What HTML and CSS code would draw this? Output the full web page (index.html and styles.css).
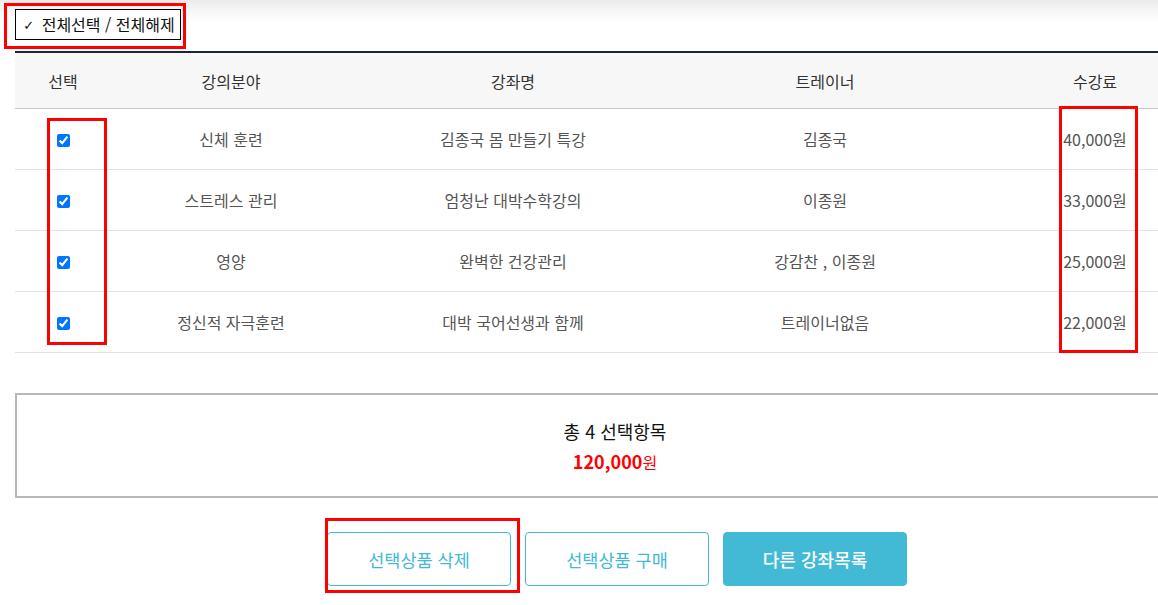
FILE: index.html
```html
<!DOCTYPE html>
<html lang="ko">
<head>
<meta charset="utf-8">
<title>장바구니</title>
<link rel="stylesheet" href="styles.css">
</head>
<body>
<div class="page">
  <div class="wrap">
    <button class="select-all" type="button"><span class="tick">✓</span> 전체선택 / 전체해제</button>

    <table class="cart">
      <colgroup>
        <col class="c1"><col class="c2"><col class="c3"><col class="c4"><col class="c5">
      </colgroup>
      <thead>
        <tr><th>선택</th><th>강의분야</th><th>강좌명</th><th>트레이너</th><th>수강료</th></tr>
      </thead>
      <tbody>
        <tr><td><input type="checkbox" checked></td><td>신체 훈련</td><td>김종국 몸 만들기 특강</td><td>김종국</td><td>40,000원</td></tr>
        <tr><td><input type="checkbox" checked></td><td>스트레스 관리</td><td>엄청난 대박수학강의</td><td>이종원</td><td>33,000원</td></tr>
        <tr><td><input type="checkbox" checked></td><td>영양</td><td>완벽한 건강관리</td><td>강감찬 , 이종원</td><td>25,000원</td></tr>
        <tr><td><input type="checkbox" checked></td><td>정신적 자극훈련</td><td>대박 국어선생과 함께</td><td>트레이너없음</td><td>22,000원</td></tr>
      </tbody>
    </table>

    <div class="summary">
      <p class="count">총 4 선택항목</p>
      <p class="total"><strong>120,000</strong>원</p>
    </div>

    <div class="actions">
      <button class="btn btn-line" type="button">선택상품 삭제</button>
      <button class="btn btn-line" type="button">선택상품 구매</button>
      <button class="btn btn-fill" type="button">다른 강좌목록</button>
    </div>
  </div>

  <div class="mark mark-all"></div>
  <div class="mark mark-check"></div>
  <div class="mark mark-price"></div>
  <div class="mark mark-delete"></div>
</div>
</body>
</html>
```

FILE: styles.css
```css
html, body {
  margin: 0;
  padding: 0;
  overflow: hidden;
  background: #fff;
}
body {
  font-family: "Noto Sans CJK KR", "Noto Sans", sans-serif;
  color: #333;
}
.page {
  position: relative;
  width: 1158px;
  height: 605px;
  background: linear-gradient(#ebebeb 0, #f6f6f6 10px, #fff 22px) no-repeat;
  background-size: 100% 22px;
  background-color: #fff;
}
.wrap {
  width: 1200px;
  margin-left: 15px;
  padding-top: 9px;
}
.select-all {
  display: block;
  width: 166px;
  height: 31px;
  padding: 0 0 0 2px;
  border: 1px solid #000;
  background: #fff;
  font-family: inherit;
  font-size: 16px;
  color: #111;
  text-align: center;
  line-height: 29px;
  white-space: nowrap;
}
.select-all .tick {
  font-size: 13px;
  font-family: "DejaVu Sans", sans-serif;
  margin-right: 3px;
  vertical-align: 1px;
}
.cart {
  width: 1200px;
  margin-top: 11px;
  border-collapse: collapse;
  table-layout: fixed;
  border-top: 2px solid #1d2733;
}
.c1 { width: 96px; }
.c2 { width: 240px; }
.c3 { width: 324px; }
.c4 { width: 300px; }
.c5 { width: 240px; }
.cart th {
  height: 55px;
  padding: 0;
  background: #f7f7f7;
  border-bottom: 1px solid #c8c8c8;
  font-weight: 400;
  font-size: 16px;
  color: #333;
  text-align: center;
}
.cart td {
  height: 60px;
  padding: 0;
  border-bottom: 1px solid #e2e2e2;
  font-size: 16px;
  color: #555;
  text-align: center;
}
.cart input[type="checkbox"] {
  margin: 0;
  width: 13px;
  height: 13px;
  vertical-align: middle;
  position: relative;
  top: -1px;
}
.summary {
  margin-top: 40px;
  height: 101px;
  border: 2px solid #b8b8b8;
  text-align: center;
}
.summary p {
  margin: 0;
}
.count {
  padding-top: 23px;
  font-size: 18px;
  line-height: 26px;
  color: #111;
}
.total {
  margin-top: 4px !important;
  font-size: 16px;
  line-height: 26px;
  color: #f00;
}
.total strong {
  font-size: 18px;
  font-weight: 700;
}
.actions {
  display: flex;
  justify-content: center;
  gap: 14px;
  margin-top: 34px;
  padding-left: 4px;
}
.btn {
  width: 184px;
  height: 54px;
  border-radius: 4px;
  font-family: inherit;
  font-size: 17.5px;
  padding: 0;
}
.btn-line {
  border: 1px solid #42bad6;
  background: #fff;
  color: #42bad6;
}
.btn-fill {
  border: 1px solid #42bad6;
  background: #42bad6;
  color: #fff;
  font-size: 18px;
  font-weight: 500;
}
.mark {
  position: absolute;
  border: 3px solid #f00;
  box-sizing: border-box;
  pointer-events: none;
}
.mark-all { left: 4px; top: 3px; width: 182px; height: 46px; }
.mark-check { left: 47px; top: 118px; width: 60px; height: 227px; }
.mark-price { left: 1059px; top: 106px; width: 79px; height: 247px; }
.mark-delete { left: 325px; top: 518px; width: 195px; height: 75px; }
```
